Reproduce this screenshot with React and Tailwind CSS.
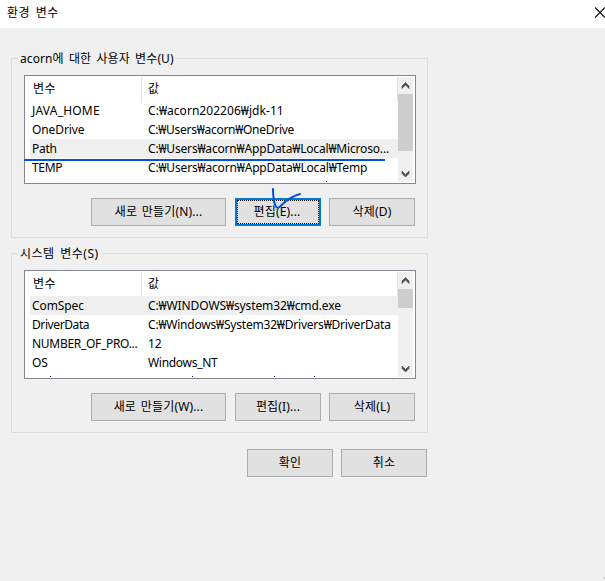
import React from 'react';

const userRows = [
  { name: 'JAVA_HOME', nameClass: 'tracking-[0.2px]', value: 'C:₩acorn202206₩jdk-11', valueClass: 'tracking-[0.05px]' },
  { name: 'OneDrive', nameClass: 'tracking-[-0.1px]', value: 'C:₩Users₩acorn₩OneDrive', valueClass: 'tracking-[-0.27px]' },
  {
    name: 'Path',
    nameClass: 'tracking-[-0.3px]',
    value: 'C:₩Users₩acorn₩AppData₩Local₩Microso...',
    valueClass: 'tracking-[-0.17px]',
    selected: true,
  },
  { name: 'TEMP', nameClass: 'tracking-[-0.3px]', value: 'C:₩Users₩acorn₩AppData₩Local₩Temp', valueClass: 'tracking-[-0.16px]' },
];

const systemRows = [
  { name: 'ComSpec', nameClass: 'tracking-[-0.1px]', value: 'C:₩WINDOWS₩system32₩cmd.exe', valueClass: 'tracking-[-0.1px]', selected: true },
  { name: 'DriverData', nameClass: 'tracking-[-0.4px]', value: 'C:₩Windows₩System32₩Drivers₩DriverData', valueClass: 'tracking-[-0.2px]' },
  { name: 'NUMBER_OF_PRO...', nameClass: 'tracking-[-0.3px]', value: '12', valueClass: 'tracking-[-0.1px]' },
  { name: 'OS', nameClass: 'tracking-[-0.1px]', value: 'Windows_NT', valueClass: 'tracking-[-0.3px]' },
];

function Arrow({ down }) {
  return (
    <svg className="block h-[17px] w-[15px] shrink-0" viewBox="0 0 15 17">
      <path
        d={down ? 'M4 6v2.5l3.5 3.5 3.5-3.5v-2.5l-3.5 3.5z' : 'M4 11.5v-2.5l3.5-3.5 3.5 3.5v2.5l-3.5-3.5z'}
        fill="#505050"
        stroke="#505050"
        strokeWidth="0.7"
      />
    </svg>
  );
}

function VariableList({ rows, thumb, children }) {
  return (
    <div className="relative flex h-[109px] w-[392px] border border-[#828790] bg-white p-px">
      <div className="h-[105px] w-[372px] overflow-hidden">
        <div className="flex h-6">
          <div className="w-[116px] border-r border-[#e0e0e0] pl-[7px] leading-6 tracking-[0.4px]">변수</div>
          <div className="grow border-r border-[#e0e0e0] pl-[6px] leading-6">값</div>
        </div>
        {rows.map((row) => (
          <div key={row.name} className={`ml-1 flex h-[19px] leading-[19px] ${row.selected ? 'bg-[#efefef]' : ''}`}>
            <span className={`w-[118px] shrink-0 pl-[2px] ${row.nameClass}`}>{row.name}</span>
            <span className={row.valueClass}>{row.value}</span>
          </div>
        ))}
      </div>
      <div className="flex w-[15px] flex-col bg-[#f0f0f0]">
        <Arrow />
        <div className={`bg-[#cdcdcd] ${thumb}`} />
        <div className="grow" />
        <Arrow down />
      </div>
      {children}
    </div>
  );
}

function Button({ children, wide, focused }) {
  return (
    <button
      className={`flex h-7 items-center justify-center bg-[#e1e1e1] tracking-[0.15px] [word-spacing:1.5px] ${
        wide ? 'w-[135px]' : 'w-[86px]'
      } ${focused ? 'border-2 border-[#0078d7]' : 'border border-[#adadad]'}`}
    >
      {focused ? (
        <span className="flex h-full w-full items-center justify-center border border-dotted border-black pr-[2px]">{children}</span>
      ) : (
        children
      )}
    </button>
  );
}

function Group({ title, titleClass, children }) {
  return (
    <section className="relative ml-[11px] h-[180px] w-[417px] border border-[#dcdcdc] pl-3 pt-4">
      <h2 className={`absolute -top-[9px] left-[6px] bg-[#f0f0f0] px-[2px] leading-[18px] [word-spacing:2px] ${titleClass}`}>
        {title}
      </h2>
      {children}
    </section>
  );
}

export default function App() {
  return (
    <main className="h-[581px] w-[605px] overflow-hidden bg-[#f0f0f0] font-['Noto_Sans','Noto_Sans_CJK_KR',sans-serif] text-[12px] text-black">
      <header className="flex h-7 items-center justify-between overflow-hidden bg-white pl-[7px]">
        <h1 className="pb-[3px] tracking-[0.5px] [word-spacing:2px]">환경 변수</h1>
        <svg className="h-[11px] w-[10px] -translate-y-[2px]" viewBox="0 0 10 11">
          <path d="M0 0.5l10 10M0 10.5l10-10" stroke="#000" strokeWidth="1.1" />
        </svg>
      </header>

      <div className="pt-[30px]">
        <Group title="acorn에 대한 사용자 변수(U)" titleClass="tracking-[0.1px]">
          <VariableList rows={userRows} thumb="h-[57px]">
            <i className="absolute left-[301px] top-[105px] h-px w-px bg-[#301040]" />
            <i className="absolute -left-px top-[83px] h-[2px] w-[361px] bg-[#0050e0]" />
          </VariableList>
          <div className="relative mt-[14px] flex pl-[67px]">
            <Button wide>새로 만들기(N)...</Button>
            <div className="ml-[9px]">
              <Button focused>편집(E)...</Button>
            </div>
            <div className="ml-2">
              <Button>삭제(D)</Button>
            </div>
            <svg className="pointer-events-none absolute -top-[11px] left-[247px] h-[24px] w-[32px]" viewBox="0 0 32 24" fill="none">
              <path
                d="M2 2C2 7 2.5 14 4.5 19Q6 22 9 19.5C14 15 18 10 29 7"
                stroke="#0050e0"
                strokeWidth="2"
                strokeLinecap="round"
              />
            </svg>
          </div>
        </Group>
      </div>

      <div className="mt-[15px]">
        <Group title="시스템 변수(S)" titleClass="tracking-[0.5px]">
          <VariableList rows={systemRows} thumb="h-[19px]">
            <i className="absolute left-[25px] top-[105px] h-px w-px bg-[#301040]" />
            <i className="absolute left-[167px] top-[105px] h-px w-px bg-[#301040]" />
            <i className="absolute left-[249px] top-[105px] h-px w-px bg-[#301040]" />
            <i className="absolute left-[289px] top-[105px] h-px w-px bg-[#301040]" />
          </VariableList>
          <div className="mt-[14px] flex pl-[67px]">
            <Button wide>새로 만들기(W)...</Button>
            <div className="ml-[9px]">
              <Button>편집(I)...</Button>
            </div>
            <div className="ml-2">
              <Button>삭제(L)</Button>
            </div>
          </div>
        </Group>
      </div>

      <footer className="mt-4 flex gap-2 pl-[247px]">
        <Button>확인</Button>
        <Button>취소</Button>
      </footer>
      <div className="ml-[604px] mt-[100px] h-[2px] w-px bg-[#b4b4b4]" />
    </main>
  );
}
